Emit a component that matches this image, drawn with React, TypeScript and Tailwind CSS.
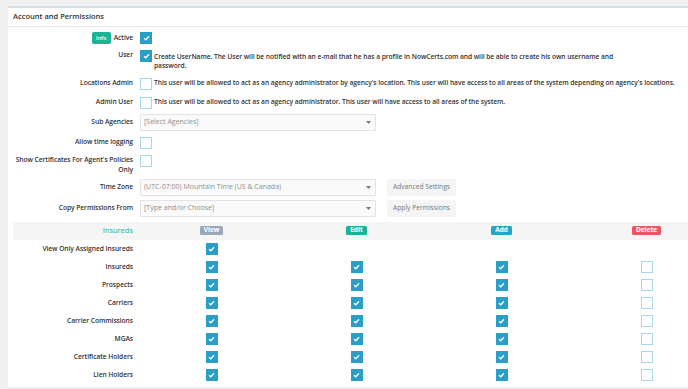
import type { ReactNode } from 'react'

function Check({ checked }: { checked: boolean }) {
  if (checked) {
    return (
      <span className="flex h-[12px] w-[12px] shrink-0 items-center justify-center bg-[#2a9ec6]">
        <svg width="7" height="6" viewBox="0 0 7 6">
          <polyline
            points="1,3.2 2.8,4.8 6,1.2"
            fill="none"
            stroke="white"
            strokeWidth="1.3"
          />
        </svg>
      </span>
    )
  }
  return (
    <span className="block h-[12px] w-[12px] shrink-0 border-[1.5px] border-[#a6d9e8] bg-white" />
  )
}

function Caret() {
  return (
    <svg width="5" height="3" viewBox="0 0 5 3" className="shrink-0">
      <polygon points="0,0 5,0 2.5,3" fill="#777" />
    </svg>
  )
}

function Select({ text }: { text: string }) {
  return (
    <div className="flex h-[17px] w-[236px] items-center justify-between rounded-[1px] border border-[#e1e3e5] bg-[#fafafa] pl-[3px] pr-[4px] text-[7px] tracking-normal text-[#8f8f8f]">
      <span className="font-normal">{text}</span>
      <Caret />
    </div>
  )
}

function Btn({ children }: { children: ReactNode }) {
  return (
    <div className="ml-[11px] flex h-[17px] w-[69px] items-center justify-center rounded-[2px] bg-[#f5f5f5] font-normal tracking-normal text-[#777]">
      {children}
    </div>
  )
}

function Row({
  label,
  className = '',
  align = 'items-center',
  children,
}: {
  label: ReactNode
  className?: string
  align?: string
  children: ReactNode
}) {
  return (
    <div className={`flex ${align} ${className}`}>
      <div className="flex w-[120px] shrink-0 flex-col items-end whitespace-nowrap">{label}</div>
      <div className="ml-[7px] flex flex-1 items-center">{children}</div>
    </div>
  )
}

function Badge({ color, children }: { color: string; children: ReactNode }) {
  return (
    <span
      className={`inline-flex h-[9.5px] items-center rounded-[1.5px] px-[4px] text-[6.5px] font-bold leading-none tracking-normal text-white ${color}`}
    >
      {children}
    </span>
  )
}

const perms: [string, boolean, boolean, boolean, boolean][] = [
  ['View Only Assigned Insureds', true, false, false, false],
  ['Insureds', true, true, true, false],
  ['Prospects', true, true, true, false],
  ['Carriers', true, true, true, false],
  ['Carrier Commissions', true, true, true, false],
  ['MGAs', true, true, true, false],
  ['Certificate Holders', true, true, true, false],
  ['Lien Holders', true, true, true, false],
]

export default function App() {
  return (
    <div
      className="h-[389px] w-[688px] overflow-hidden bg-[#f0f0f0] pl-[8px] pt-[6px] text-[6.7px] font-semibold tracking-[-0.06px] text-[#333]"
      style={{ fontFamily: '"Open Sans", "Liberation Sans", sans-serif' }}
    >
      <div className="h-[381px] w-[720px] border-t-2 border-[#d6dde2] bg-white">
        <div className="flex h-[19px] items-center border-b border-[#e7eaec] pl-[5px] text-[7.5px] tracking-normal text-[#333]">
          Account and Permissions
        </div>
        <div className="pl-[5px]">
          <Row
            label={
              <span className="inline-flex items-center gap-[3px]">
                <span className="inline-flex h-[12px] w-[19px] items-center justify-center rounded-[2px] bg-[#1ab394] text-[5.5px] text-white">
                  Info
                </span>
                Active
              </span>
            }
            className="mt-[5px] h-[12px]"
          >
            <Check checked />
          </Row>
          <Row label="User" className="mt-[6px]" align="items-start">
            <div className="flex items-start">
              <Check checked />
              <p className="ml-[2px] mt-[1.5px] w-[478px] leading-[9px]">
                Create UserName. The User will be notified with an e-mail that he has a profile in NowCerts.com and will be able to create his own username and password.
              </p>
            </div>
          </Row>
          <Row label="Locations Admin" className="mt-[8px] h-[12px]">
            <Check checked={false} />
            <span className="ml-[2px] whitespace-nowrap">
              This user will be allowed to act as an agency administrator by agency's location. This user will have access to all areas of the system depending on agency's locations.
            </span>
          </Row>
          <Row label="Admin User" className="mt-[7px] h-[12px]">
            <Check checked={false} />
            <span className="ml-[2px] whitespace-nowrap">
              This user will be allowed to act as an agency administrator. This user will have access to all areas of the system.
            </span>
          </Row>
          <Row label="Sub Agencies" className="mt-[5px] h-[17px]">
            <Select text="[Select Agencies]" />
          </Row>
          <Row label="Allow time logging" className="mt-[6px] h-[12px]">
            <Check checked={false} />
          </Row>
          <Row
            label={
              <>
                <span className="leading-[10px]">Show Certificates For Agent's Policies</span>
                <span className="leading-[10px]">Only</span>
              </>
            }
            className="mt-[6px] h-[21px]"
            align="items-start"
          >
            <Check checked={false} />
          </Row>
          <Row label="Time Zone" className="mt-[3px] h-[17px]">
            <Select text="(UTC-07:00) Mountain Time (US & Canada)" />
            <Btn>Advanced Settings</Btn>
          </Row>
          <Row label="Copy Permissions From" className="mt-[4px] h-[17px]">
            <Select text="[Type and/or Choose]" />
            <Btn>Apply Permissions</Btn>
          </Row>

          <div className="mt-[5px] grid h-[18px] grid-cols-[126px_repeat(4,145px)] items-center bg-[#f5f5f5]">
            <div className="pr-[6px] text-right text-[7.5px] font-normal tracking-normal text-[#1ab394]">Insureds</div>
            <div className="flex justify-center"><Badge color="bg-[#9ba7b9]">View</Badge></div>
            <div className="flex justify-center"><Badge color="bg-[#1ab394]">Edit</Badge></div>
            <div className="flex justify-center"><Badge color="bg-[#23a7c8]">Add</Badge></div>
            <div className="flex justify-center"><Badge color="bg-[#ed5565]">Delete</Badge></div>
          </div>
          <div className="pt-[1px]">
            {perms.map(([name, v, e, a, d], i) => (
              <div key={name} className="grid h-[17.9px] grid-cols-[126px_repeat(4,145px)] items-center">
                <div className="pr-[6px] text-right">{name}</div>
                <div className="flex justify-center"><Check checked={v} /></div>
                <div className="flex justify-center">{i > 0 && <Check checked={e} />}</div>
                <div className="flex justify-center">{i > 0 && <Check checked={a} />}</div>
                <div className="flex justify-center">{i > 0 && <Check checked={d} />}</div>
              </div>
            ))}
          </div>
        </div>
      </div>
    </div>
  )
}
